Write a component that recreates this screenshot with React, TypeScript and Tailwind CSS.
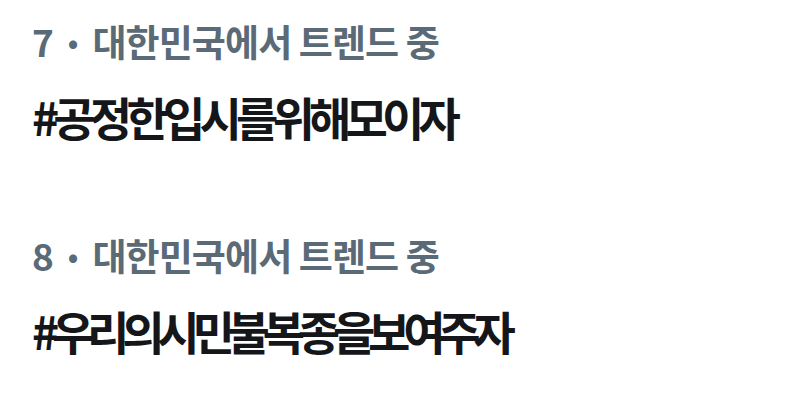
const trends = [
  { rank: 7, place: "대한민국에서 트렌드 중", tag: "#공정한입시를위해모이자", tight: false },
  { rank: 8, place: "대한민국에서 트렌드 중", tag: "#우리의시민불복종을보여주자", tight: true },
];

export default function App() {
  return (
    <div
      className="w-[804px] h-[404px] bg-white overflow-hidden pl-[32px] pt-[19px] flex flex-col gap-[90px]"
      style={{ fontFamily: '"Noto Sans CJK KR", "Noto Sans", sans-serif' }}
    >
      {trends.map((t) => (
        <div key={t.rank} className="flex flex-col">
          <div className="flex items-center text-[37px] leading-[44px] font-bold text-[#5b6a77] whitespace-nowrap">
            <span>{t.rank}</span>
            <span className="mx-[14px] text-[28px]">•</span>
            <span className="tracking-[-0.9px]">{t.place}</span>
          </div>
          <div
            className={
              t.tight
                ? "mt-[26px] text-[46px] leading-[54px] font-bold text-[#141619] whitespace-nowrap tracking-[-7.2px]"
                : "mt-[26px] text-[46px] leading-[54px] font-bold text-[#141619] whitespace-nowrap tracking-[-5.8px]"
            }
          >
            {t.tag}
          </div>
        </div>
      ))}
    </div>
  );
}
